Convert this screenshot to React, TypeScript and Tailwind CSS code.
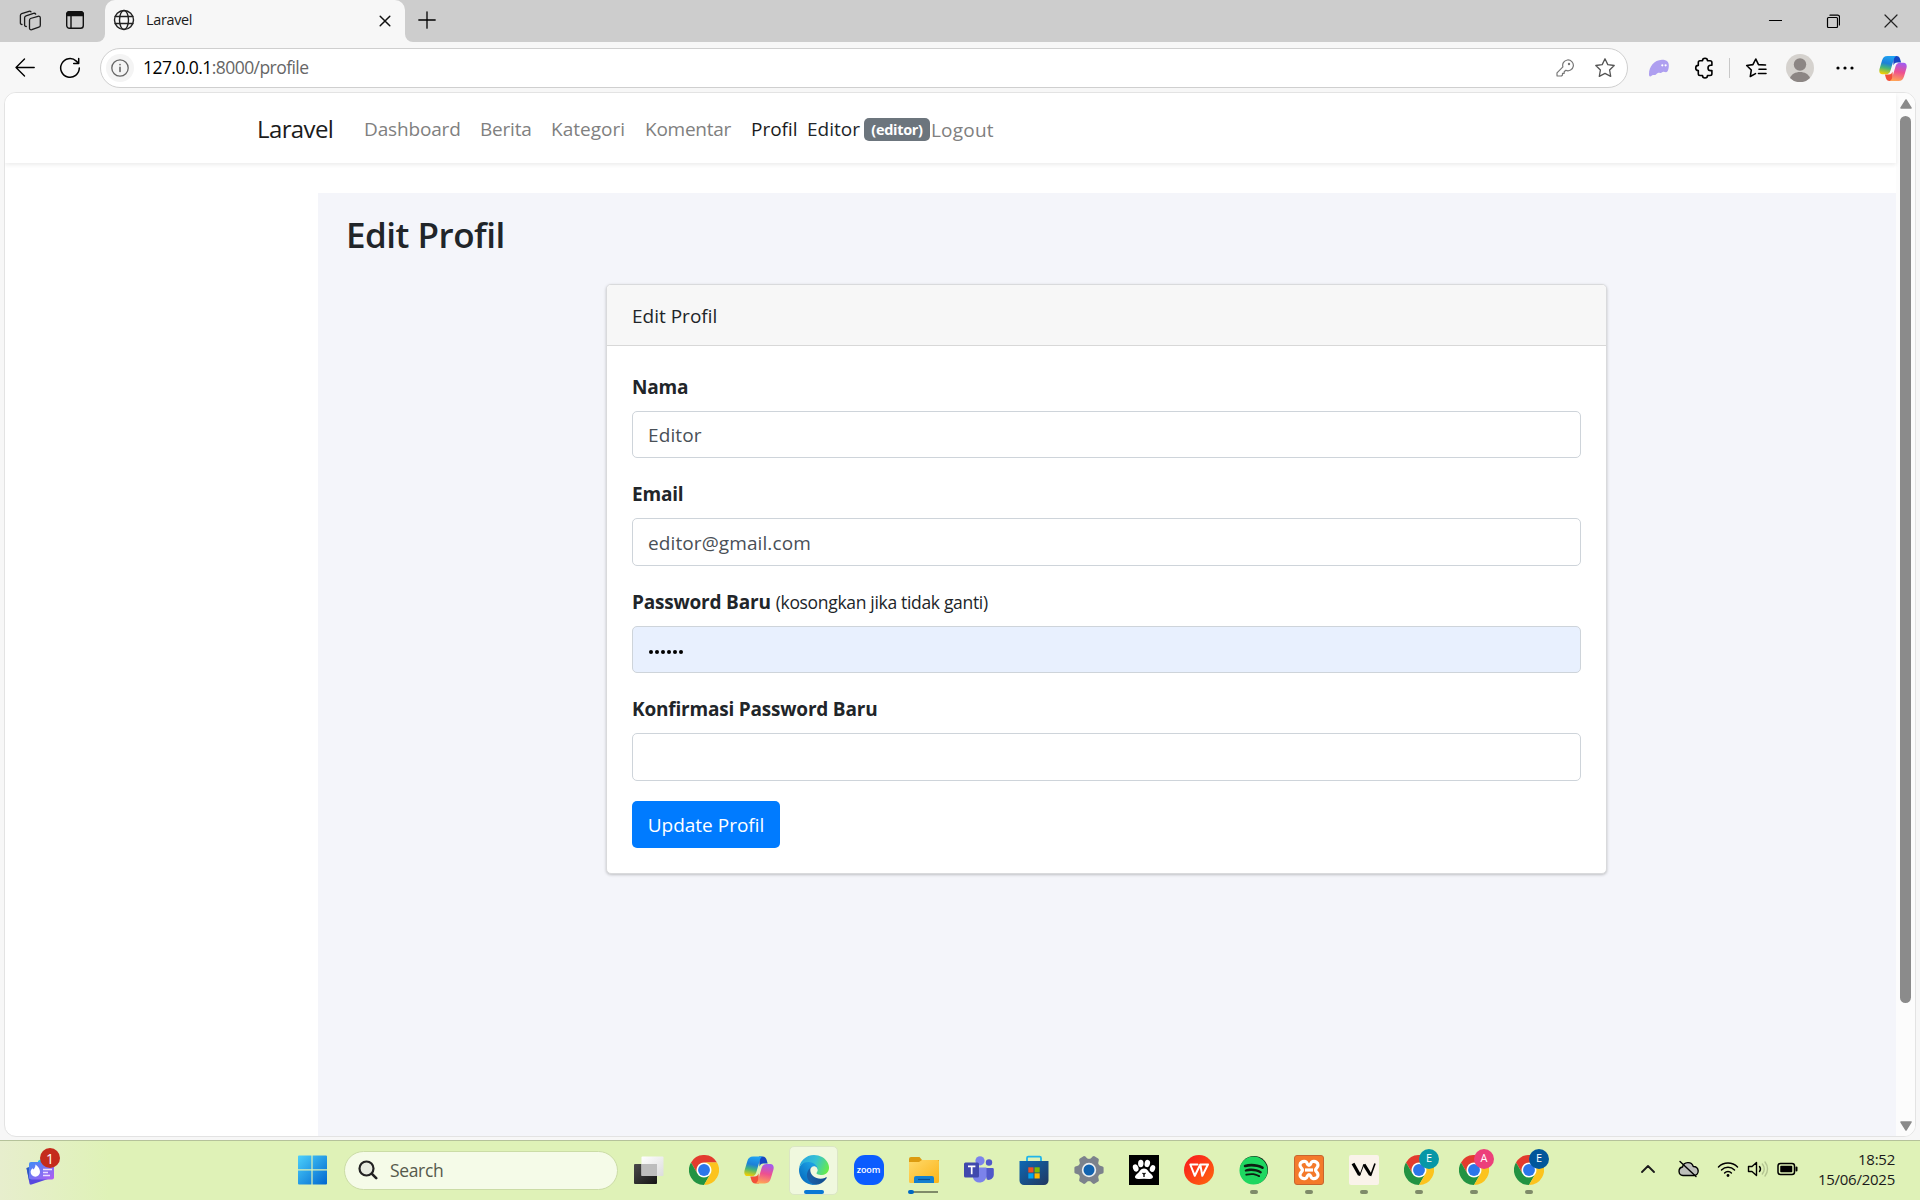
import React from "react";
import { FaSpotify } from "react-icons/fa";

type IconProps = {
  w: number;
  h: number;
  children: React.ReactNode;
  className?: string;
  sw?: number;
};

function Line({ w, h, children, className = "text-[#1b1b1b]", sw = 1.4 }: IconProps) {
  return (
    <svg
      width={w}
      height={h}
      viewBox={`0 0 ${w} ${h}`}
      fill="none"
      stroke="currentColor"
      strokeWidth={sw}
      strokeLinecap="round"
      strokeLinejoin="round"
      className={`block shrink-0 ${className}`}
    >
      {children}
    </svg>
  );
}

function Copilot({ id, w, h }: { id: string; w: number; h: number }) {
  return (
    <svg width={w} height={h} viewBox="0 0 28 26" className="block">
      <defs>
        <linearGradient id={`${id}a`} x1="0.5" y1="0" x2="0.3" y2="1">
          <stop offset="0" stopColor="#1fa2f2" />
          <stop offset="0.4" stopColor="#1d80d8" />
          <stop offset="0.65" stopColor="#45b57a" />
          <stop offset="1" stopColor="#f7d000" />
        </linearGradient>
        <linearGradient id={`${id}b`} x1="0.6" y1="0" x2="0.4" y2="1">
          <stop offset="0" stopColor="#a35cf0" />
          <stop offset="0.5" stopColor="#ee5090" />
          <stop offset="1" stopColor="#ffa456" />
        </linearGradient>
      </defs>
      <path d="M14 .5h3.500c2 0 3 1.200 3.600 3l1 3.500h-4c-2 0-3 1-3.600 3z" fill="#1747c4" />
      <path d="M14 25.500h-3.500c-2 0-3-1.200-3.600-3l-1-3.500h4c2 0 3-1 3.600-3z" fill="#f2503a" />
      <path
        d="M8.500.5h9C15.500 1 15 3 14.300 5.500L11.500 15c-.8 2.600-2 3.700-4.500 3.700H3.500C.8 18.700-.2 16.500.5 13.500L3 5C4 1.800 5.500.5 8.500.5z"
        fill={`url(#${id}a)`}
      />
      <path
        d="M19.500 25.500h-9c2-.5 2.500-2.500 3.200-5L16.500 11c.8-2.600 2-3.700 4.500-3.700h3.500c2.700 0 3.700 2.200 3 5.200L25 21c-1 3.200-2.500 4.500-5.500 4.500z"
        fill={`url(#${id}b)`}
      />
    </svg>
  );
}

function Chrome() {
  return (
    <svg width="30" height="30" viewBox="0 0 48 48" className="block">
      <circle cx="24" cy="24" r="12" fill="#fff" />
      <path d="M24 12h20.800A24 24 0 0 0 3.200 12l10.400 18A12 12 0 0 1 24 12z" fill="#e33b2e" />
      <path d="M34.400 30A12 12 0 0 1 13.600 30L3.200 12A24 24 0 0 0 24 48z" fill="#229342" />
      <path d="M24 12h20.800A24 24 0 0 1 24 48l10.400-18A12 12 0 0 0 24 12z" fill="#fcc31e" />
      <circle cx="24" cy="24" r="9.500" fill="#2b76ea" />
    </svg>
  );
}

function Edge() {
  return (
    <svg width="30" height="30" viewBox="0 0 256 256" className="block">
      <defs>
        <linearGradient id="edgeNavy" x1="0.200" y1="0.700" x2="1" y2="0.700">
          <stop offset="0" stopColor="#1a5fa8" />
          <stop offset="1" stopColor="#114a8b" />
        </linearGradient>
        <linearGradient id="edgeBlue" x1="0.800" y1="0.300" x2="0.200" y2="1">
          <stop offset="0" stopColor="#1b9de2" />
          <stop offset="1" stopColor="#0669bd" />
        </linearGradient>
        <linearGradient id="edgeGreen" x1="0" y1="0.300" x2="1" y2="0.600">
          <stop offset="0" stopColor="#27a6df" />
          <stop offset="0.500" stopColor="#35c1d5" />
          <stop offset="1" stopColor="#66eb4a" />
        </linearGradient>
      </defs>
      <path d="M231.200 190.500c-3.400 1.800-6.900 3.400-10.500 4.700a101 101 0 0 1-35.900 6.500c-47.300 0-88.500-32.500-88.500-74.300.1-11.400 6.400-21.900 16.400-27.300-42.800 1.800-53.800 46.400-53.800 72.500 0 74 68.100 81.400 82.800 81.400 7.900 0 19.800-2.300 27-4.600l1.300-.4a128.300 128.300 0 0 0 66.600-52.800c1.200-1.900.6-4.300-1.200-5.500-1.300-.8-2.900-.9-4.200-.2z" fill="url(#edgeNavy)" />
      <path d="M105.700 241.400a79.200 79.200 0 0 1-22.700-21.300 80.700 80.700 0 0 1 29.500-120c3.200-1.500 8.500-4.100 15.600-4 10.100.1 19.600 4.900 25.700 13 4 5.400 6.300 11.900 6.400 18.700 0-.2 24.500-79.600-80-79.600-43.900 0-80 41.700-80 78.200-.2 19.300 4 38.500 12.100 56a128 128 0 0 0 156.300 67 75.500 75.500 0 0 1-62.800-8z" fill="url(#edgeBlue)" />
      <path d="M152.300 148.900c-.9 1-3.400 2.500-3.400 5.600 0 2.600 1.700 5.100 4.700 7.300 14.500 10 41.700 8.700 41.800 8.700 10.700 0 21.200-2.900 30.400-8.300A61.800 61.800 0 0 0 256.100 109c.3-22.400-8-37.300-11.300-43.900C223.500 23.700 177.700 0 128 0A128 128 0 0 0 0 126.200c.5-36.500 36.800-66 80-66 3.500 0 23.500.3 42 10.100 16.300 8.500 24.800 18.900 30.800 29.200 6.100 10.600 7.200 24.100 7.200 29.500 0 5.400-2.700 13.300-7.800 19.900z" fill="url(#edgeGreen)" />
    </svg>
  );
}

function TaskItem({ children, mark = false }: { children: React.ReactNode; mark?: boolean }) {
  return (
    <div className="relative flex h-[60px] w-[55px] shrink-0 items-center justify-center pb-px">
      {children}
      {mark && <span className="absolute bottom-[7px] left-[24px] h-1 w-2 rounded-full bg-[#7f8b69]" />}
    </div>
  );
}

function ChromeProfile({ letter, badge }: { letter: string; badge: string }) {
  return (
    <TaskItem mark>
      <Chrome />
      <span className={`absolute left-[28px] top-[8px] flex h-5 w-5 items-center justify-center rounded-full text-[11px] text-white ${badge}`}>
        {letter}
      </span>
    </TaskItem>
  );
}

function TabStrip() {
  return (
    <div className="flex h-[42px] shrink-0 bg-[#f7f7f7]">
      <div className="flex w-[105px] items-center rounded-br-[8px] bg-[#cdcdcd] pl-[19px]">
        <Line w={24} h={22} sw={1.300}>
          <path d="M11.500 8.500l7.500-2.200c1.300-.4 2.300.3 2.300 1.600v7.300c0 1-.5 1.700-1.500 2l-7 2.500c-1.300.4-2.300-.3-2.300-1.500v-7.600c0-1 .3-1.800 1-2.100z" />
          <path d="M7.300 16.500c-1 0-1.700-.6-1.700-1.600V7.800c0-1 .5-1.700 1.400-2l7.500-2.400c1-.3 1.800 0 2.200.7" />
          <path d="M3 14.500c-1 0-1.600-.6-1.600-1.600V5.500c0-1 .4-1.600 1.300-1.900l7.300-2.300c.9-.3 1.600 0 2 .5" />
        </Line>
        <Line w={20} h={20} className="ml-[22px] mb-[2px] text-[#111]">
          <rect x="1.700" y="1.700" width="16.600" height="16.600" rx="2.800" />
          <path d="M1.700 5.500V4a2.300 2.300 0 0 1 2.300-2.300h12A2.300 2.300 0 0 1 18.300 4v1.500z" fill="currentColor" />
          <path d="M6 6v12" />
        </Line>
      </div>
      <div className="flex w-[300px] items-center rounded-t-[10px] bg-[#f7f7f7] pl-[8px] pr-[12px] pb-[2px] shadow-[0_-30px_0_0_#cdcdcd] [clip-path:inset(-30px_0_0_0)]">
        <Line w={22} h={22} className="text-[#222]">
          <circle cx="11" cy="11" r="9.500" />
          <ellipse cx="11" cy="11" rx="4.500" ry="9.500" />
          <path d="M2.200 7.500h17.600M2.200 14.500h17.600" />
        </Line>
        <span className="ml-[11px] text-[14.400px] tracking-[-0.3px] text-[#1b1b1b]">Laravel</span>
        <Line w={14} h={14} sw={1.500} className="ml-auto mr-px mt-px text-[#111]">
          <path d="M2.200 2.200l9.600 9.600M11.800 2.200L2.200 11.800" />
        </Line>
      </div>
      <div className="flex flex-1 items-center rounded-bl-[8px] bg-[#cdcdcd] pl-[13px]">
        <Line w={18} h={18} sw={1.300} className="mb-[3px]">
          <path d="M9 .8v16.400M.8 9h16.400" />
        </Line>
        <div className="ml-auto flex items-center pr-[22px]">
          <Line w={14} h={14} sw={1.200} className="text-black"><path d="M1.500 6.500h12" /></Line>
          <Line w={14} h={14} sw={1.200} className="ml-[44px] text-black">
            <rect x="1.500" y="3.500" width="10" height="10" rx="1" />
            <path d="M4 1.200h7.700c1 0 1.800.8 1.800 1.800v8" />
          </Line>
          <Line w={14} h={14} sw={1.200} className="ml-[44px] text-[#222]"><path d="M1 1l12 12M13 1L1 13" /></Line>
        </div>
      </div>
    </div>
  );
}

function Toolbar() {
  return (
    <div className="flex h-[50px] shrink-0 items-center bg-[#f7f7f7] pl-[15px] pt-[2px]">
      <Line w={20} h={20} sw={1.400} className="text-black"><path d="M19.200 9.500H1M9.500 1L1 9.500 9.500 18" /></Line>
      <Line w={22} h={22} sw={1.500} className="ml-[24px] text-black">
        <path d="M20.300 11a9.300 9.300 0 1 1-3-6.900l2.200 2.100M19.700 1.500v5h-5" />
      </Line>
      <div className="ml-[19px] flex h-[40px] w-[1528px] items-center rounded-full border border-[#cfcfcf] bg-white pl-[5px]">
        <span className="flex h-[28px] w-[28px] items-center justify-center rounded-full bg-[#f4f4f4]">
          <Line w={18} h={18} sw={1.300} className="text-[#666]">
            <circle cx="9" cy="9" r="8.200" />
            <path d="M9 8.200v4.300M9 5.500v.2" strokeWidth="1.600" />
          </Line>
        </span>
        <span className="mb-px ml-[9px] text-[17.500px] tracking-[-0.560px] text-black">
          127.0.0.1<span className="text-[#666]">:8000/profile</span>
        </span>
        <Line w={18} h={18} sw={1.200} className="ml-auto text-[#777]">
          <path d="M11.300 1a5.400 5.400 0 1 1-1.500 10.300L8.200 12.800v1.500H6.500V16l-1 1H1.600a.6.600 0 0 1-.6-.6v-2.600l5.900-5.900A5.400 5.400 0 0 1 11.300 1z" />
          <circle cx="13" cy="5" r=".6" fill="currentColor" />
        </Line>
        <Line w={22} h={22} sw={1.300} className="ml-[20px] mr-[11px] text-[#555]">
          <path d="M11 1.800l2.800 5.800 6.400.9-4.600 4.500 1.100 6.400L11 16.400l-5.700 3 1.100-6.400L1.800 8.500l6.400-.9z" />
        </Line>
      </div>
      <svg width="22" height="18" viewBox="0 0 22 18" className="ml-[20px] block">
        <path d="M1 15C1 8 6 1 14 .8c5 0 7.300 2.700 6.800 6.700-.3 3-1 5.500-2.800 5.700-1.200.1-1.600-.5-2.600-.4-1.200.1-1.400 1-2.900 1.100-1.300.1-1.700-.3-2.700.1-1.200.5-1.500 1.800-2.900 2-1 .2-1.200-.3-2 .1-.9.4-1.800 1.500-3 1.300C1.200 17.200.9 16.300 1 15z" fill="#ae9ff0" />
        <circle cx="14.300" cy="6.300" r="1.100" fill="#fff" />
        <circle cx="17.600" cy="6.300" r="1.100" fill="#fff" />
      </svg>
      <Line w={20} h={22} sw={1.600} className="ml-[24px] text-black">
        <path d="M6 3.700h2.500a2.500 2.500 0 0 1 5 0H16c1.200 0 1.900.7 1.900 1.700v2.800h-1.200a2.700 2.700 0 0 0 0 5.400h1.200v3.200c0 1-.7 1.700-1.900 1.700h-2.500a2.500 2.500 0 0 1-5 0H6c-1 0-1.700-.7-1.700-1.700v-3.200a2.600 2.600 0 0 1 0-5.200v-3C4.300 4.400 5 3.700 6 3.700z" />
      </Line>
      <span className="ml-[15px] h-[20px] w-px bg-[#c8c8c8]" />
      <Line w={22} h={22} sw={1.600} className="ml-[15px] text-black">
        <path d="M10.500 16.600l-5.200 2.900 1-6.500L1.700 8.500l6.200-.9L10.800 2l2.700 5.600 7 .4M14 12.200h7M13.500 16.500H21" />
      </Line>
      <svg width="28" height="28" viewBox="0 0 28 28" className="ml-[19px] block">
        <circle cx="14" cy="14" r="14" fill="#d5d2ce" />
        <circle cx="14" cy="10.500" r="6.200" fill="#8c8684" />
        <path d="M4 24c1.500-4 5.500-6 10-6s8.500 2 10 6a14 14 0 0 1-20 0z" fill="#8c8684" />
      </svg>
      <svg width="18" height="4" viewBox="0 0 18 4" className="ml-[22px] block">
        <circle cx="2" cy="2" r="1.600" /><circle cx="9" cy="2" r="1.600" /><circle cx="16" cy="2" r="1.600" />
      </svg>
      <div className="ml-[25px]"><Copilot id="tb" w={28} h={27} /></div>
    </div>
  );
}

function Navbar() {
  return (
    <nav className="relative z-10 flex h-[70px] shrink-0 items-center bg-white pl-[252px] pt-[2px] text-[19px] text-[#808080] shadow-[0_2px_4px_rgba(0,0,0,0.075)]">
      <span className="w-[107px] text-[24px] tracking-[-0.6px] text-[#1b1b1b]">Laravel</span>
      <span className="w-[116px] tracking-[-0.15px]">Dashboard</span>
      <span className="w-[71px] tracking-[-0.2px]">Berita</span>
      <span className="w-[94px]">Kategori</span>
      <span className="w-[106px] tracking-[-0.25px]">Komentar</span>
      <span className="w-[56px] text-[#1b1b1b]">Profil</span>
      <span className="w-[57px] text-[#212529]">Editor</span>
      <span className="mt-px flex h-[23px] w-[66px] items-center justify-center rounded-[5px] bg-[#6c757d] pt-px text-[14.500px] font-bold tracking-[-0.3px] text-white">(editor)</span>
      <span className="ml-[1px] mt-[2px] tracking-[0.2px]">Logout</span>
    </nav>
  );
}

function Field({ label, note, value, filled, h }: { label: string; note?: string; value?: string; filled?: boolean; h: string }) {
  return (
    <div className="mb-[20px]">
      <div className="flex h-[30px] items-center pt-[2px] text-[19px] font-bold tracking-[-0.2px] text-[#212529]">
        {label}
        {note && <span className="ml-[5px] text-[17.500px] font-normal tracking-[-0.32px]">{note}</span>}
      </div>
      <div className={`mt-[10px] flex items-center rounded-[5px] border border-[#ced4da] px-[15px] pt-[2px] text-[19px] text-[#495057] ${h} ${filled ? "bg-[#e8f0fe]" : "bg-white"}`}>
        {filled ? (
          <span className="mt-[3px] flex gap-[2px] pl-px">
            {[0, 1, 2, 3, 4, 5].map((i) => <span key={i} className="h-[4px] w-[4px] rounded-full bg-black" />)}
          </span>
        ) : <span className="tracking-[0.1px]">{value}</span>}
      </div>
    </div>
  );
}

function Page() {
  return (
    <div className="mx-[4px] flex h-[1045px] shrink-0 overflow-hidden rounded-[12px] border border-[#e3e3e3] bg-white">
      <div className="flex w-[1891px] flex-col">
        <Navbar />
        <main className="ml-[313px] mt-[30px] flex-1 bg-[#f4f5fa]">
          <h1 className="pl-[28px] pt-[15px] text-[35px] font-semibold leading-[54px] tracking-[-0.5px] text-[#212529]">Edit Profil</h1>
          <section className="ml-[288px] mt-[22px] h-[590px] w-[1001px] rounded-[5px] border border-[#d9dadc] bg-white shadow-[0_1px_3px_rgba(0,0,0,0.22)]">
            <header className="flex h-[61px] items-center rounded-t-[4px] border-b border-[#d8d8d8] bg-[#f7f7f7] pl-[25px] pt-[2px] text-[19px] text-[#212529]">Edit Profil</header>
            <div className="px-[25px] pt-[25px]">
              <Field label="Nama" value="Editor" h="h-[47px]" />
              <Field label="Email" value="editor@gmail.com" h="h-[48px]" />
              <Field label="Password Baru" note="(kosongkan jika tidak ganti)" filled h="h-[47px]" />
              <Field label="Konfirmasi Password Baru" h="h-[48px]" />
              <button className="flex h-[47px] w-[148px] items-center justify-center rounded-[5px] bg-[#007bff] pt-[2px] text-[19px] text-white">Update Profil</button>
            </div>
          </section>
        </main>
      </div>
      <div className="flex flex-1 flex-col items-center bg-[#fcfcfc] pt-[6px]">
        <svg width="12" height="10" viewBox="0 0 12 10" className="block"><path d="M6 1l5 8H1z" fill="#8b8b8b" stroke="#8b8b8b" strokeLinejoin="round" strokeWidth="1.500" /></svg>
        <div className="mt-[7px] h-[887px] w-[11px] rounded-full bg-[#8b8b8b]" />
        <svg width="12" height="10" viewBox="0 0 12 10" className="mt-[118px] block"><path d="M6 9l5-8H1z" fill="#8b8b8b" stroke="#8b8b8b" strokeLinejoin="round" strokeWidth="1.500" /></svg>
      </div>
    </div>
  );
}

function Taskbar() {
  return (
    <footer className="flex h-[60px] shrink-0 items-center border-t border-[#b5c29a] bg-[linear-gradient(90deg,#e7eecd_0px,#dff2b7_110px,#dff2b7_100%)]">
      <div className="relative ml-[26px] w-[34px] pb-px">
        <svg width="30" height="30" viewBox="0 0 30 30" className="block">
          <defs>
            <linearGradient id="wid" x1="0" y1="0" x2="1" y2="1"><stop offset="0" stopColor="#3f8cf5" /><stop offset="1" stopColor="#b25cf2" /></linearGradient>
          </defs>
          <path d="M12 6l9-6v12h-9z" fill="#27bde0" />
          <path d="M.5 13l3 15.500c.2 1 1 1.400 2 1.100L22 24z" fill="#5848df" />
          <path d="M.5 13l5-2v14H3z" fill="#2c5cc0" />
          <rect x="3" y="7" width="25" height="17.500" rx="2" fill="url(#wid)" />
          <path d="M9.500 9.500c3 2 4.500 5 4.500 7.500a4.700 4.700 0 0 1-9.400 0c0-1.500.8-2.800 2-3.800l.8 1.300c1.400-1.200 2.100-3 2.100-5z" fill="#fff" />
          <path d="M17 14.500h9M17 17.500h5M17 20.500h7" stroke="#eadcff" strokeWidth="1.600" />
        </svg>
        <span className="absolute -top-[7px] left-[14px] flex h-5 w-5 items-center justify-center rounded-full bg-[#c42b1c] text-[14px] text-white">1</span>
      </div>
      <svg width="30" height="30" viewBox="0 0 30 30" className="-mt-px ml-[237px] block">
        <defs><linearGradient id="win" x1="0" y1="0" x2="1" y2="1"><stop offset="0" stopColor="#4cd0fb" /><stop offset="1" stopColor="#0067cf" /></linearGradient></defs>
        <path d="M1 1.500A1 1 0 0 1 2 .5h12.400v13.700H1zM15.600.5H29a1 1 0 0 1 1 1v12.700H15.600zM1 15.500h13.400v14H2a1 1 0 0 1-1-1zM15.600 15.500H30v13a1 1 0 0 1-1 1H15.600z" fill="url(#win)" />
      </svg>
      <div className="-mt-px ml-[17px] flex h-[39px] w-[274px] items-center rounded-full border border-[#cbdca6] bg-[#f5fbe8] pl-[13px]">
        <Line w={20} h={20} sw={2.200} className="text-[#222]"><circle cx="8.500" cy="8.500" r="7" fill="#e7ebdf" /><path d="M13.700 13.700l4.500 4.500" strokeWidth="2.600" /></Line>
        <span className="ml-[12px] text-[17.500px] tracking-[-0.35px] text-[#555a4c]">Search</span>
      </div>
      <div className="ml-[3px] flex">
        <TaskItem>
          <svg width="30" height="30" viewBox="0 0 30 30" className="block">
            <defs>
              <linearGradient id="tvd" x1="0" y1="0" x2="1" y2="1"><stop offset="0" stopColor="#4a4a4a" /><stop offset="1" stopColor="#151515" /></linearGradient>
              <linearGradient id="tvl" x1="0" y1="0" x2="1" y2="1"><stop offset="0" stopColor="#fff" /><stop offset="1" stopColor="#dcdcdc" /></linearGradient>
            </defs>
            <rect x="0" y="9" width="23" height="20" rx="1" fill="url(#tvd)" />
            <rect x="7.500" y="1.500" width="22" height="19.500" rx="1" fill="url(#tvl)" />
            <path d="M7.500 9H23v12H7.500z" fill="#bdbdbd" />
          </svg>
        </TaskItem>
        <TaskItem><Chrome /></TaskItem>
        <TaskItem><Copilot id="tk" w={30} h={28} /></TaskItem>
        <TaskItem>
          <span className="absolute inset-x-[3px] top-[5px] h-[49px] rounded-[5px] border border-[#dbe6c4] bg-[#f0f8de]" />
          <span className="relative"><Edge /></span>
          <span className="absolute bottom-[7px] left-[18px] h-1 w-5 rounded-full bg-[#0a78d4]" />
        </TaskItem>
        <TaskItem>
          <span className="flex h-[30px] w-[30px] items-center justify-center rounded-[11px] bg-[#0b5cff] pb-px text-[9px] font-semibold tracking-[-0.1px] text-white">zoom</span>
        </TaskItem>
        <TaskItem>
          <svg width="30" height="28" viewBox="0 0 30 28" className="block">
            <defs><linearGradient id="fold" x1="0" y1="0" x2="1" y2="1"><stop offset="0" stopColor="#ffd96a" /><stop offset="1" stopColor="#fbb418" /></linearGradient></defs>
            <path d="M0 3a2 2 0 0 1 2-2h8.500l2.500 3H30v8H0z" fill="#dc9b10" />
            <path d="M0 6h10l3-2h15.500A1.500 1.500 0 0 1 30 5.500v20a1.500 1.500 0 0 1-1.500 1.500h-27A1.500 1.500 0 0 1 0 25.500z" fill="url(#fold)" />
            <path d="M5 27v-5a2 2 0 0 1 2-2h16a2 2 0 0 1 2 2v5z" fill="#1480d0" />
            <path d="M9 23.500h12" stroke="#0a4f94" strokeWidth="1.200" />
          </svg>
          <span className="absolute bottom-[8px] left-[14px] h-[2px] w-[28px] bg-[#7f8b69]" />
          <span className="absolute bottom-[7px] left-[12px] h-1 w-[6px] rounded-full bg-[#0068c4]" />
        </TaskItem>
        <TaskItem>
          <svg width="30" height="28" viewBox="0 0 30 28" className="block">
            <circle cx="25" cy="6.500" r="3.200" fill="#5059c9" />
            <path d="M20 12h8.500a1.300 1.300 0 0 1 1.300 1.300V19a5 5 0 0 1-7 4.500z" fill="#5059c9" />
            <circle cx="16" cy="4.800" r="4.600" fill="#7b83eb" />
            <path d="M9 11.500h13.500V20a7 7 0 0 1-13.500 2z" fill="#7b83eb" />
            <rect x="0" y="6.500" width="15" height="15" rx="1.500" fill="#4049ad" />
            <path d="M4 10.300h7.400M7.700 10.300v8" stroke="#fff" strokeWidth="1.700" />
          </svg>
        </TaskItem>
        <TaskItem>
          <svg width="30" height="30" viewBox="0 0 30 30" className="block">
            <defs><linearGradient id="store" x1="0" y1="0" x2="1" y2="1"><stop offset="0" stopColor="#0d68b4" /><stop offset="1" stopColor="#223860" /></linearGradient></defs>
            <path d="M8 7V3a1.300 1.300 0 0 1 1.300-1.300h11.400A1.300 1.300 0 0 1 22 3v4" fill="none" stroke="#21b5ea" strokeWidth="1.800" />
            <path d="M.5 6h29v19.500a4.500 4.500 0 0 1-4.500 4.500H5A4.500 4.500 0 0 1 .5 25.500z" fill="url(#store)" />
            <path d="M9.300 12.300h5.200v5.200H9.300z" fill="#f25022" /><path d="M15.500 12.300h5.200v5.200h-5.200z" fill="#7fba00" />
            <path d="M9.300 18.300h5.200v5.200H9.300z" fill="#00a4ef" /><path d="M15.500 18.300h5.200v5.200h-5.200z" fill="#ffb900" />
          </svg>
        </TaskItem>
        <TaskItem>
          <svg width="30" height="30" viewBox="0 0 30 30" className="block">
            <g fill="#7c828c">
              <circle cx="15" cy="15" r="11.200" />
              {[30, 90, 150, 210, 270, 330].map((a) => (
                <path key={a} d="M10 6l1.500-4.600a1.500 1.500 0 0 1 1.400-1h4.200a1.500 1.500 0 0 1 1.400 1L20 6z" transform={`rotate(${a} 15 15)`} />
              ))}
            </g>
            <circle cx="15" cy="15" r="7.200" fill="#eceff1" />
            <circle cx="15" cy="15" r="5.500" fill="#1263b0" />
          </svg>
        </TaskItem>
        <TaskItem>
          <svg width="30" height="30" viewBox="0 0 30 30" className="block">
            <path d="M0 0h30v30H0z" fill="#000" />
            <g fill="#fff">
              <ellipse cx="6.700" cy="13" rx="2.700" ry="3.700" transform="rotate(-20 6.700 13)" />
              <ellipse cx="11.800" cy="8.500" rx="2.700" ry="3.700" />
              <ellipse cx="18.300" cy="8.500" rx="2.700" ry="3.700" transform="rotate(12 18.300 8.500)" />
              <ellipse cx="23.500" cy="13.500" rx="2.600" ry="3.500" transform="rotate(20 23.500 13.500)" />
              <path d="M15 13.500c3.500 0 4 3 6.500 5s4.500 5-1 5.500l-5.500-.2-5.500.2c-5.500-.5-3.500-3.500-1-5.500s3-5 6.500-5z" />
            </g>
            <path d="M13.500 18l1.500 1.200 1.500-1.200M15 19.200V22" stroke="#000" strokeWidth="1.300" fill="none" />
          </svg>
        </TaskItem>
        <TaskItem>
          <svg width="30" height="30" viewBox="0 0 30 30" className="block">
            <defs><linearGradient id="wps" x1="0" y1="0" x2="1" y2="1"><stop offset="0" stopColor="#f9151d" /><stop offset="1" stopColor="#ff6a0e" /></linearGradient></defs>
            <circle cx="15" cy="15" r="15" fill="url(#wps)" />
            <path d="M13.500 9.500H6.300l4.500 11.300 5.500-11.300 2 11.300 5.700-11.300h-6.500" fill="none" stroke="#fff" strokeWidth="2" strokeLinejoin="round" strokeLinecap="round" />
          </svg>
        </TaskItem>
        <TaskItem mark>
          <span className="flex h-[28px] w-[28px] items-center justify-center rounded-full bg-[#0d1f12]"><FaSpotify size={29} color="#1ed760" className="shrink-0" /></span>
        </TaskItem>
        <TaskItem mark>
          <span className="flex h-[30px] w-[30px] items-center justify-center rounded-[3px] border border-[#c76530] bg-[#f47a2b]">
            <svg width="24" height="22" viewBox="0 0 24 22" fill="none" stroke="#fff" strokeWidth="3.200" strokeLinejoin="round">
              <path d="M8.500 2.500C10.500 3 10 6.500 12 6.500s1.500-3.500 3.500-4c3-.7 5.500 1 5.500 3.500 0 3-2.500 3-2.500 5s2.500 2 2.500 5c0 2.500-2.500 4.200-5.500 3.500-2-.5-1.500-4-3.500-4s-1.500 3.500-3.500 4C5.500 20.200 3 18.500 3 16c0-3 2.500-3 2.500-5S3 9 3 6c0-2.500 2.500-4.200 5.500-3.500z" />
              <path d="M8 11h8" />
            </svg>
          </span>
        </TaskItem>
        <TaskItem mark>
          <svg width="30" height="30" viewBox="0 0 30 30" className="block">
            <rect width="30" height="30" rx="2" fill="#faf3ea" />
            <path d="M4 8.500L10.500 20" stroke="#000" strokeWidth="3.200" />
            <path d="M10.500 21l4.500-12" stroke="#000" strokeWidth="1" />
            <path d="M15 9.500L21.500 20" stroke="#000" strokeWidth="3.200" />
            <path d="M21.500 21l4.500-12.500" stroke="#000" strokeWidth="1.600" />
          </svg>
        </TaskItem>
        <ChromeProfile letter="E" badge="bg-[#0797a7]" />
        <ChromeProfile letter="A" badge="bg-[#ec407a]" />
        <ChromeProfile letter="E" badge="bg-[#01579b]" />
      </div>
      <div className="ml-auto flex items-center pr-[25px] pb-[3px]">
        <Line w={14} h={8} sw={1.800}><path d="M1 7l6-6 6 6" /></Line>
        <Line w={22} h={18} className="ml-[22px]" sw={1.400}>
          <path d="M6 15.500A4.300 4.300 0 0 1 5.500 7a5.600 5.600 0 0 1 10.800-.5A4.500 4.500 0 0 1 17 15.500z" fill="#bdbfba" />
          <path d="M3 1.500l16 15" />
        </Line>
        <Line w={22} h={18} className="ml-[18px]" sw={1.500}>
          <path d="M1.500 7a13.500 13.500 0 0 1 19 0M4.500 10a9.200 9.200 0 0 1 13 0M7.600 13a4.800 4.800 0 0 1 6.800 0" />
          <circle cx="11" cy="15.500" r="1.400" fill="currentColor" stroke="none" />
        </Line>
        <Line w={22} h={18} className="ml-[8px]" sw={1.400}>
          <path d="M1.500 6.500H5L9.500 2.500v13L5 11.500H1.500z" /><path d="M12.500 6.500a4 4 0 0 1 0 5" />
          <path d="M15.300 4a7.500 7.500 0 0 1 0 10M18 2a11 11 0 0 1 0 14" stroke="#b4c592" />
        </Line>
        <Line w={22} h={14} className="ml-[8px]" sw={1.500}>
          <rect x="1" y="1.500" width="16.500" height="11" rx="2.500" /><rect x="4" y="4.500" width="10.500" height="5" fill="currentColor" />
          <path d="M19.500 5.500v3" strokeWidth="2" />
        </Line>
        <div className="ml-[18px] w-[78px] whitespace-nowrap text-right text-[15px] leading-[20px] tracking-[-0.25px] text-[#1b1b1b]">
          <div>18:52</div><div>15/06/2025</div>
        </div>
      </div>
    </footer>
  );
}

export default function App() {
  return (
    <div className="flex h-[1200px] w-[1920px] flex-col overflow-hidden bg-[#f7f7f7] font-['Open_Sans','Noto_Sans',sans-serif]">
      <TabStrip />
      <Toolbar />
      <Page />
      <div className="h-[3px] shrink-0" />
      <Taskbar />
    </div>
  );
}
